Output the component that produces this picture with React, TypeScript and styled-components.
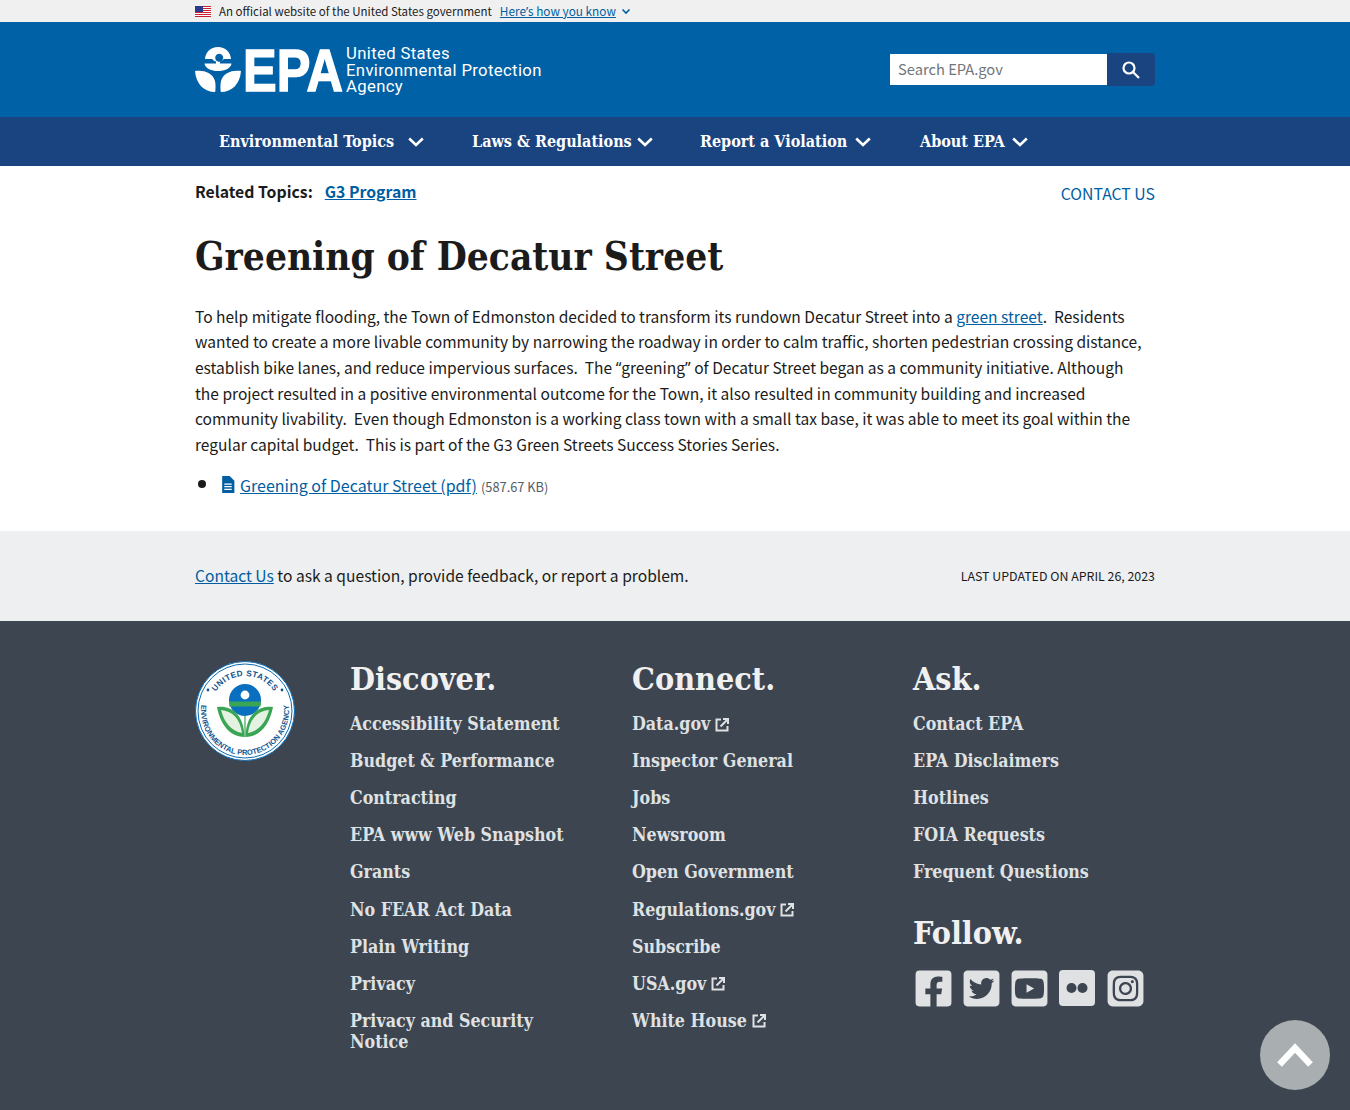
import React from "react";
import styled, { createGlobalStyle } from "styled-components";
import { FaFacebookSquare, FaTwitterSquare, FaYoutubeSquare } from "react-icons/fa";
import { FaSquareInstagram } from "react-icons/fa6";

const SANS = `"Noto Sans CJK SC", "Noto Sans", sans-serif`;
const SERIF = `"DejaVu Serif Condensed", "DejaVu Serif", serif`;

const Global = createGlobalStyle`
  html, body { margin: 0; padding: 0; }
  body { background: #fff; color: #1b1b1b; font-family: ${SANS}; height: 1110px; overflow: hidden; position: relative; }
  a { color: #005ea2; }
`;
const Container = styled.div`
  width: 960px;
  margin: 0 auto;
`;
const Quote = styled.span`
  font-family: "Noto Sans", sans-serif;
  font-size: 1em;
`;
const Banner = styled.div`
  height: 22px;
  background: #f0f0f0;
`;
const BannerRow = styled(Container)`
  display: flex;
  align-items: center;
  height: 22px;
  font-size: 11.5px;
  line-height: 22px;
  color: #1b1b1b;
  a { margin-left: 8px; font-size: 11.8px; }
`;
const FlagIcon = styled.svg`
  width: 16px;
  height: 11px;
  margin-right: 8px;
`;
const BannerChevron = styled.svg`
  width: 10px;
  height: 10px;
  margin-left: 5px;
`;
const Header = styled.header`
  background: #0061a6;
  height: 95px;
`;
const HeaderRow = styled(Container)`
  display: flex;
  justify-content: space-between;
  align-items: center;
  height: 95px;
`;
const Logo = styled.div`
  display: flex;
  align-items: center;
  color: #fff;
`;
const LogoMark = styled.svg`
  width: 150px;
  height: 48px;
  display: block;
  overflow: visible;
`;
const LogoWords = styled.div`
  margin-left: 1px;
  padding-top: 3px;
  font: 400 16.7px/16.4px Roboto, sans-serif;
  letter-spacing: 0.35px;
  color: #fff;
`;
const SearchBox = styled.form`
  display: flex;
  align-items: center;
  width: 265px;
  height: 33px;
  margin: 0;
`;
const SearchInput = styled.div`
  flex: 1;
  height: 31px;
  background: #fff;
  box-sizing: border-box;
  padding-left: 8px;
  font-size: 14.7px;
  line-height: 30px;
  color: #71767a;
`;
const SearchButton = styled.div`
  width: 48px;
  height: 33px;
  background: #1a4480;
  border-radius: 0 4px 4px 0;
  display: flex;
  align-items: center;
  justify-content: center;
`;
const Nav = styled.nav`
  background: #1a4480;
  height: 49px;
`;
const NavRow = styled(Container)`
  display: grid;
  grid-template-columns: 253px 228px 220px auto;
  height: 49px;
  align-items: center;
`;
const NavItem = styled.div<{ $width: number }>`
  display: flex;
  align-items: center;
  justify-content: space-between;
  width: ${(p) => p.$width}px;
  box-sizing: border-box;
  padding-left: 24px;
  color: #fff;
  font: 700 16px/24px ${SERIF};
  white-space: nowrap;
`;
const NavChevron = styled.svg`
  width: 16px;
  height: 10px;
`;
const TopicRow = styled(Container)`
  display: flex;
  justify-content: space-between;
  align-items: flex-start;
  height: 61px;
`;
const Related = styled.div`
  margin-top: 14px;
  font-size: 15.8px;
  line-height: 24px;
  font-weight: 700;
  a { margin-left: 12px; }
`;
const ContactLink = styled.a`
  margin-top: 16px;
  font-size: 15.8px;
  line-height: 24px;
  text-decoration: none;
`;
const Title = styled.h1`
  margin: 0;
  font: 700 38.5px/60px ${SERIF};
  color: #1b1b1b;
`;
const Body = styled(Container)`
  height: 365px;
`;
const Para = styled.p`
  margin: 17px 0 0;
  max-width: 952px;
  font-size: 15.55px;
  line-height: 25.35px;
  color: #1b1b1b;
`;
const FileList = styled.ul`
  margin: 14px 0 0;
  padding-left: 26px;
  font-size: 16px;
  line-height: 25.44px;
`;
const FileItem = styled.li`
  &::marker { font-size: 1.3em; }
  a { margin-left: 4px; }
`;
const FileSize = styled.span`
  font-size: 12.8px;
  color: #565c65;
  margin-left: 4px;
`;
const FileGlyph = styled.svg`
  width: 14px;
  height: 17px;
  vertical-align: -1px;
  margin-right: 1px;
`;
const Updated = styled.div`
  background: #edeff0;
  height: 90px;
`;
const UpdatedRow = styled(Container)`
  height: 88px;
  display: flex;
  justify-content: space-between;
  align-items: center;
  font-size: 15.6px;
  line-height: 25px;
`;
const UpdatedDate = styled.span`
  font-size: 12.4px;
  margin-top: 2px;
  text-transform: uppercase;
`;
const Footer = styled.footer`
  background: #3d4551;
  height: 489px;
`;
const FooterGrid = styled(Container)`
  display: grid;
  grid-template-columns: 155px 282px 281px 242px;
  padding-top: 40px;
`;
const Seal = styled.svg`
  width: 100px;
  height: 100px;
  display: block;
`;
const FooterCol = styled.div`
  color: #dfe1e2;
  padding-right: 40px;
`;
const FooterHead = styled.h2<{ $gap?: number }>`
  margin: ${(p) => p.$gap ?? 0}px 0 8px;
  font: 700 32px/36px ${SERIF};
  color: #f0f0f0;
`;
const FooterLink = styled.div`
  font: 700 17.7px/21px ${SERIF};
  color: #dfe1e2;
  padding: 8.05px 0;
  display: flex;
  align-items: center;
  gap: 4px;
  svg { margin-top: 2px; }
`;
const Socials = styled.div`
  display: flex;
  gap: 12px;
  margin-top: 19px;
  margin-left: 2px;
`;
const SocialTile = styled.div`
  width: 36px;
  height: 36px;
  display: flex;
  align-items: center;
  justify-content: center;
  color: #dfe1e2;
  svg { width: 41px; height: 41px; display: block; flex: none; }
`;
const FlickrTile = styled.div`
  width: 36px;
  height: 36px;
  border-radius: 4px;
  background: #dfe1e2;
  display: flex;
  align-items: center;
  justify-content: center;
  svg { width: 24px; height: 24px; }
`;
const BackTop = styled.div`
  position: absolute;
  right: 20px;
  bottom: 20px;
  width: 70px;
  height: 70px;
  border-radius: 50%;
  background: #a9aeb1;
  display: flex;
  align-items: center;
  justify-content: center;
`;

const ExtIcon = () => (
  <svg width="16" height="16" viewBox="0 0 16 16" fill="none" stroke="#dfe1e2" strokeWidth="2">
    <path d="M7 2.500H2.500v11h11V9" />
    <path d="M6.500 9.500 13 3M9 2h5v5" />
  </svg>
);
const Chevron = () => (
  <NavChevron viewBox="0 0 16 10" fill="none" stroke="#fff" strokeWidth="2.600">
    <path d="M1.200 1.500 8 8l6.800-6.500" />
  </NavChevron>
);

const discover = ["Accessibility Statement", "Budget & Performance", "Contracting", "EPA www Web Snapshot", "Grants", "No FEAR Act Data", "Plain Writing", "Privacy", "Privacy and Security Notice"];
const connect: [string, boolean][] = [["Data.gov", true], ["Inspector General", false], ["Jobs", false], ["Newsroom", false], ["Open Government", false], ["Regulations.gov", true], ["Subscribe", false], ["USA.gov", true], ["White House", true]];
const ask = ["Contact EPA", "EPA Disclaimers", "Hotlines", "FOIA Requests", "Frequent Questions"];
const navItems: [string, number][] = [["Environmental Topics", 229], ["Laws & Regulations", 205], ["Report a Violation", 195], ["About EPA", 132]];

export default function App() {
  return (
    <>
      <Global />
      <Banner>
        <BannerRow>
          <FlagIcon viewBox="0 0 16 11">
            <rect width="16" height="11" fill="#fff" />
            {[0, 2, 4, 6, 8, 10].map((y) => <rect key={y} y={y} width="16" height="1" fill="#c8202f" />)}
            <rect width="8" height="6" fill="#2b3a8c" />
          </FlagIcon>
          An official website of the United States government
          <a href="#">Here<Quote>’</Quote>s how you know</a>
          <BannerChevron viewBox="0 0 10 10" fill="none" stroke="#005ea2" strokeWidth="1.600"><path d="M1.500 3.500 5 7l3.500-3.500" /></BannerChevron>
        </BannerRow>
      </Banner>
      <Header>
        <HeaderRow>
          <Logo>
            <LogoMark viewBox="0 0 150 48" fill="#fff">
              <path fillRule="evenodd" d="M23 1C15.500 1 10.500 6 10 13h7.200c1 1.600 2.600 2.400 3.800 2.400v2H9.600v.8c1.200 4 6.500 6.800 13.400 6.800s12.200-2.800 13.400-6.800v-.8H25v-2c1.200 0 2.800-.8 3.800-2.400H36C35.500 6 30.500 1 23 1Zm0 7a4 4 0 1 1 0 7.600A4 4 0 0 1 23 8Z" />
              <path d="M0 25c8-1.500 18 1.500 20 10 .8 3.500.6 8 .2 11C9 46 1 38 0 25ZM46 25c-8-1.500-18 1.500-20 10-.8 3.500-.6 8-.2 11C37 46 45 38 46 25Z" />
              <text x="48" y="45" fontFamily="Liberation Sans" fontWeight="700" fontSize="60" stroke="#fff" strokeWidth="1.500" textLength="100" lengthAdjust="spacingAndGlyphs">EPA</text>
            </LogoMark>
            <LogoWords>United States<br />Environmental Protection<br />Agency</LogoWords>
          </Logo>
          <SearchBox>
            <SearchInput>Search EPA.gov</SearchInput>
            <SearchButton>
              <svg width="20" height="20" viewBox="0 0 20 20" fill="none" stroke="#fff" strokeWidth="2.200">
                <circle cx="8" cy="8" r="5.500" /><path d="m12 12 6 6" />
              </svg>
            </SearchButton>
          </SearchBox>
        </HeaderRow>
      </Header>
      <Nav>
        <NavRow>
          {navItems.map(([n, w]) => <NavItem key={n} $width={w}>{n}<Chevron /></NavItem>)}
        </NavRow>
      </Nav>
      <Body>
        <TopicRow>
          <Related>Related Topics:<a href="#">G3 Program</a></Related>
          <ContactLink href="#">CONTACT US</ContactLink>
        </TopicRow>
        <Title>Greening of Decatur Street</Title>
        <Para>
          To help mitigate flooding, the Town of Edmonston decided to transform its rundown Decatur Street into a <a href="#">green street</a>.&nbsp; Residents wanted to create a more livable community by narrowing the roadway in order to calm traffic, shorten pedestrian crossing distance, establish bike lanes, and reduce impervious surfaces.&nbsp; The <Quote>“</Quote>greening<Quote>”</Quote> of Decatur Street began as a community initiative. Although the project resulted in a positive environmental outcome for the Town, it also resulted in community building and increased community livability.&nbsp; Even though Edmonston is a working class town with a small tax base, it was able to meet its goal within the regular capital budget.&nbsp; This is part of the G3 Green Streets Success Stories Series.
        </Para>
        <FileList>
          <FileItem>
            <FileGlyph viewBox="0 0 13 16">
              <path fill="#005ea2" d="M1 0h7l4.500 4.500V16H1Z" />
              <path fill="#fff" d="M3 7h7v1.200H3zM3 9.500h7v1.200H3zM3 12h7v1.200H3z" />
            </FileGlyph>
            <a href="#">Greening of Decatur Street (pdf)</a>
            <FileSize>(587.67 KB)</FileSize>
          </FileItem>
        </FileList>
      </Body>
      <Updated>
        <UpdatedRow>
          <span><a href="#">Contact Us</a> to ask a question, provide feedback, or report a problem.</span>
          <UpdatedDate>Last updated on April 26, 2023</UpdatedDate>
        </UpdatedRow>
      </Updated>
      <Footer>
        <FooterGrid>
          <div>
            <Seal viewBox="0 0 100 100">
              <defs>
                <path id="sealTop" d="M15 50a35 35 0 0 1 70 0" />
                <path id="sealBottom" d="M8.650 35A44 44 0 1 0 91.350 35" />
              </defs>
              <circle cx="50" cy="50" r="49.500" fill="#fff" stroke="#0b6cb5" strokeWidth="1" />
              <circle cx="50" cy="50" r="47" fill="none" stroke="#0b6cb5" strokeWidth="1" />
              <text fontFamily="Liberation Sans" fontWeight="700" fontSize="8.200" fill="#13558f" letterSpacing="0.4">
                <textPath href="#sealTop" startOffset="50%" textAnchor="middle">UNITED STATES</textPath>
              </text>
              <text fontFamily="Liberation Sans" fontWeight="700" fontSize="7.500" fill="#13558f">
                <textPath href="#sealBottom" startOffset="50%" textAnchor="middle">ENVIRONMENTAL PROTECTION AGENCY</textPath>
              </text>
              <circle cx="13" cy="29" r="1.400" fill="#13558f" />
              <circle cx="87" cy="29" r="1.400" fill="#13558f" />
              <circle cx="50" cy="39" r="16" fill="#0a6fbe" />
              <path d="M34 40.500h32l-.4 5H34.400Z" fill="#3aa655" />
              <circle cx="50" cy="34" r="4.400" fill="#fff" />
              <path d="M22 46c13-2 27 6 27.500 30C34 76 25 62 22 46ZM78 46c-13-2-27 6-27.500 30C66 76 75 62 78 46Z" fill="#3aa655" />
              <path d="M26 49c11 1 19 8 21 23-11-2-18-11-21-23ZM74 49c-11 1-19 8-21 23 11-2 18-11 21-23Z" fill="#e4f2e2" />
              <path d="M50 55v21" stroke="#3aa655" strokeWidth="1.200" />
            </Seal>
          </div>
          <FooterCol>
            <FooterHead>Discover.</FooterHead>
            {discover.map((d) => <FooterLink key={d}>{d}</FooterLink>)}
          </FooterCol>
          <FooterCol>
            <FooterHead>Connect.</FooterHead>
            {connect.map(([c, ext]) => <FooterLink key={c}>{c}{ext && <ExtIcon />}</FooterLink>)}
          </FooterCol>
          <FooterCol>
            <FooterHead>Ask.</FooterHead>
            {ask.map((a) => <FooterLink key={a}>{a}</FooterLink>)}
            <FooterHead $gap={25}>Follow.</FooterHead>
            <Socials>
              <SocialTile><FaFacebookSquare /></SocialTile>
              <SocialTile><FaTwitterSquare /></SocialTile>
              <SocialTile><FaYoutubeSquare /></SocialTile>
              <SocialTile><FlickrTile><svg viewBox="0 0 24 24" fill="#3d4551"><circle cx="6.500" cy="12" r="5" /><circle cx="17.500" cy="12" r="5" /></svg></FlickrTile></SocialTile>
              <SocialTile><FaSquareInstagram /></SocialTile>
            </Socials>
          </FooterCol>
        </FooterGrid>
      </Footer>
      <BackTop>
        <svg width="36" height="24" viewBox="0 0 36 24" fill="none" stroke="#fff" strokeWidth="6.500"><path d="M2.500 21.500 18 5l15.500 16.500" /></svg>
      </BackTop>
    </>
  );
}
